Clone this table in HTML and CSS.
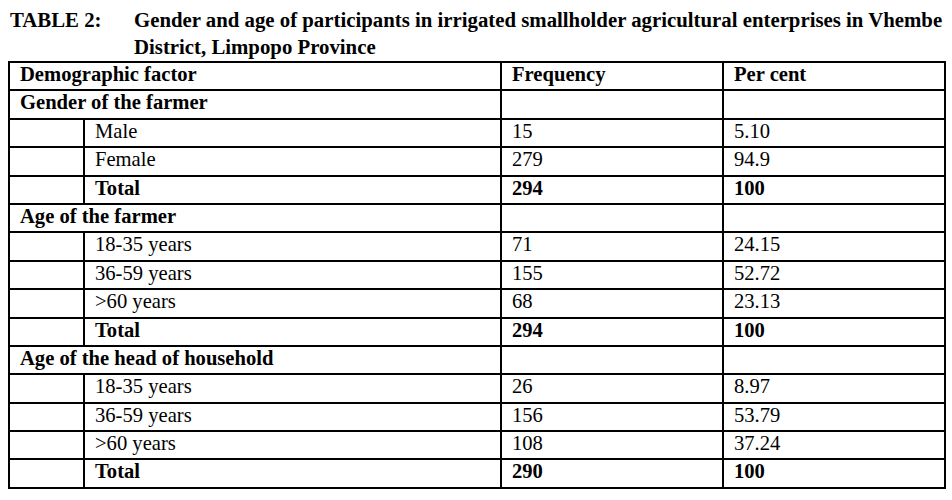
FILE: index.html
```html
<!DOCTYPE html>
<html>
<head>
<meta charset="utf-8">
<link rel="stylesheet" href="styles.css">
</head>
<body>
<div class="caption">
  <div class="label">TABLE 2:</div>
  <div class="title">Gender and age of participants in irrigated smallholder agricultural enterprises in Vhembe District, Limpopo Province</div>
</div>
<table class="data">
  <colgroup>
    <col class="c1"><col class="c2"><col class="c3"><col class="c4">
  </colgroup>
  <tr class="b"><td colspan="2">Demographic factor</td><td>Frequency</td><td>Per cent</td></tr>
  <tr class="b"><td colspan="2">Gender of the farmer</td><td></td><td></td></tr>
  <tr><td></td><td>Male</td><td>15</td><td>5.10</td></tr>
  <tr><td></td><td>Female</td><td>279</td><td>94.9</td></tr>
  <tr class="b"><td></td><td>Total</td><td>294</td><td>100</td></tr>
  <tr class="b"><td colspan="2">Age of the farmer</td><td></td><td></td></tr>
  <tr><td></td><td>18-35 years</td><td>71</td><td>24.15</td></tr>
  <tr><td></td><td>36-59 years</td><td>155</td><td>52.72</td></tr>
  <tr><td></td><td>&gt;60 years</td><td>68</td><td>23.13</td></tr>
  <tr class="b"><td></td><td>Total</td><td>294</td><td>100</td></tr>
  <tr class="b"><td colspan="2">Age of the head of household</td><td></td><td></td></tr>
  <tr><td></td><td>18-35 years</td><td>26</td><td>8.97</td></tr>
  <tr><td></td><td>36-59 years</td><td>156</td><td>53.79</td></tr>
  <tr><td></td><td>&gt;60 years</td><td>108</td><td>37.24</td></tr>
  <tr class="b"><td></td><td>Total</td><td>290</td><td>100</td></tr>
</table>
</body>
</html>
```
FILE: styles.css
```css
html, body {
  margin: 0;
  padding: 0;
  background: #fff;
}
body {
  font-family: "Liberation Serif", "Times New Roman", serif;
  color: #000;
  overflow: hidden;
}
.caption {
  display: flex;
  margin: 6px 0 0 10px;
  font-weight: bold;
  font-size: 20.8px;
  line-height: 27px;
  white-space: nowrap;
}
.label {
  width: 124px;
  flex: none;
}
.title {
  white-space: normal;
  width: 816px;
}
.data {
  margin: 1px 0 0 8px;
  border-collapse: collapse;
  table-layout: fixed;
  width: 937px;
  font-size: 20.6px;
}
.c1 { width: 75px; }
.c2 { width: 417px; }
.c3 { width: 222px; }
.c4 { width: 222px; }
.data td {
  border: 2px solid #000;
  padding: 0 0 0 10px;
  height: 26.4px;
  line-height: 23px;
  vertical-align: top;
  white-space: nowrap;
}
.b td {
  font-weight: bold;
}
```
